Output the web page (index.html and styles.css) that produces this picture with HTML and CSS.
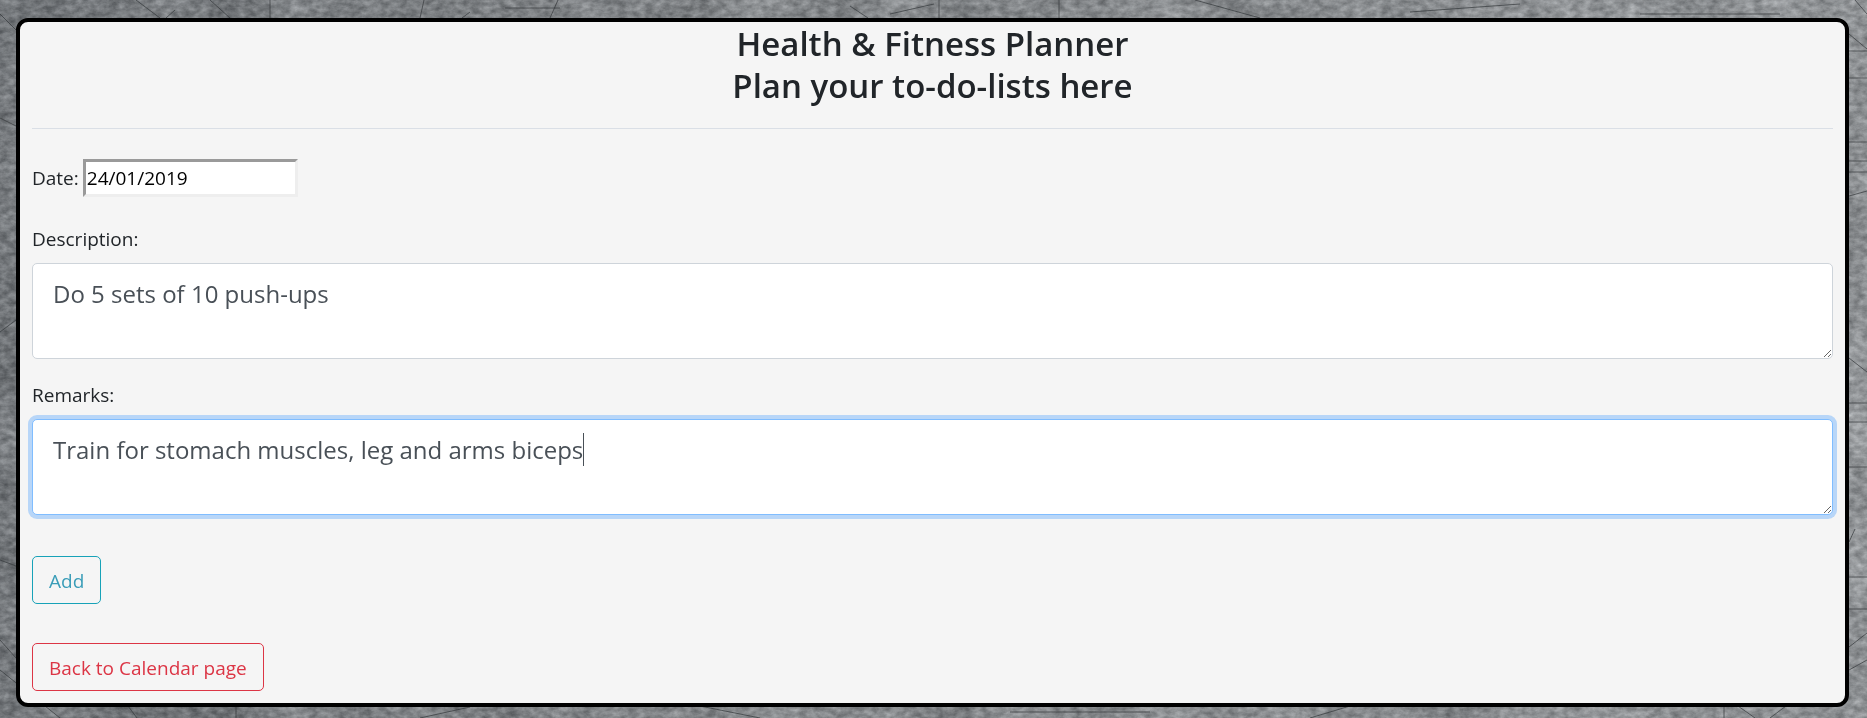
FILE: index.html
```html
<!DOCTYPE html>
<html lang="en">
<head>
<meta charset="utf-8">
<title>Health &amp; Fitness Planner</title>
<link rel="stylesheet" href="styles.css">
</head>
<body>
<svg class="backdrop" aria-hidden="true" width="100%" height="100%" preserveAspectRatio="none" viewBox="0 0 1867 718">
  <defs>
    <linearGradient id="shade" x1="0" y1="0" x2="1" y2="0">
      <stop offset="0" stop-color="#666c70"/>
      <stop offset="0.4" stop-color="#8b9092"/>
      <stop offset="1" stop-color="#a8adaf"/>
    </linearGradient>
    <filter id="grain" x="0" y="0" width="100%" height="100%" color-interpolation-filters="sRGB">
      <feTurbulence type="fractalNoise" baseFrequency="0.11 0.17" numOctaves="4" seed="8"/>
      <feColorMatrix values="0.8 0 0 0 0.08  0.8 0 0 0 0.09  0.8 0 0 0 0.1  0 0 0 0 0.4"/>
    </filter>
    <filter id="blotch" x="0" y="0" width="100%" height="100%" color-interpolation-filters="sRGB">
      <feTurbulence type="fractalNoise" baseFrequency="0.015" numOctaves="3" seed="3"/>
      <feColorMatrix values="1 0 0 0 0  1 0 0 0 0  1 0 0 0 0.02  0 0 0 0 0.3"/>
    </filter>
  </defs>
  <rect width="1867" height="718" fill="url(#shade)"/>
  <rect width="1867" height="718" filter="url(#blotch)"/>
  <rect width="1867" height="718" filter="url(#grain)"/>
  <g fill="none" stroke="#33383b" stroke-opacity="0.7">
    <path d="M136 0 160 18M175 10 166 18M210 0 230 18M270 0V18M424 0 420 18M470 12 462 18M505 8H560M558 0 550 18M850 6 868 18M890 14 934 4M939 0V18M1059 0V18M1195 0 1260 18M1410 12 1520 4M1640 14H1780M1855 0 1867 14"/>
    <path d="M0 14 16 30M0 118 16 126M0 332 16 320M0 640 16 658M0 560 16 566M0 670 60 718M128 706 137 718M236 706V718M420 718 470 707M700 706 760 718M1010 712H1150M1310 718 1350 706M1724 706V718M1738 706 1755 718M1770 718 1786 706"/>
    <path d="M1849 34 1867 49M1849 51H1867M1849 78H1867M1849 142H1867M1849 161H1867M1849 172H1867M1849 196 1867 191M1849 358 1867 372M1849 403H1867M1849 422H1867M1849 467H1867M1849 542 1855 529M1849 577H1867M1849 609H1867M1849 647 1867 633M1849 670 1867 660"/>
  </g>
</svg>
<main class="planner">
  <header class="planner-header">
    <h1 class="title">Health &amp; Fitness Planner<br>Plan your to-do-lists here</h1>
  </header>
  <hr class="divider">
  <form class="planner-form">
    <div class="date-row">
      <label for="date">Date:</label>
      <input class="date-input" id="date" type="text" value="24/01/2019">
    </div>
    <div class="field">
      <label for="description">Description:</label>
      <textarea class="text-area" id="description" rows="2">Do 5 sets of 10 push-ups</textarea>
    </div>
    <div class="field">
      <label for="remarks">Remarks:</label>
      <div class="caret-box">
        <textarea class="text-area" id="remarks" rows="2" autofocus>Train for stomach muscles, leg and arms biceps</textarea>
        <span class="caret" id="caret"></span>
      </div>
    </div>
    <div class="actions">
      <button class="btn btn-info" type="submit">Add</button>
      <a class="btn btn-danger" href="#">Back to Calendar page</a>
    </div>
  </form>
</main>
<script src="script.js"></script>
</body>
</html>
```

FILE: styles.css
```css
* {
  box-sizing: border-box;
}

body {
  margin: 18px 18px 11px 16px;
  background: #7f8486;
  color: #212529;
  font-family: "Open Sans", "Noto Sans", sans-serif;
  font-size: 19px;
  line-height: 30px;
}

.backdrop {
  position: fixed;
  inset: 0;
  z-index: -1;
}

.planner {
  padding: 0 12px 12px;
  border: 4px solid #000;
  border-radius: 12px;
  background: #f5f5f5;
}

.title {
  margin: 0;
  padding-top: 1px;
  font-size: 33px;
  font-weight: 600;
  line-height: 42px;
  text-align: center;
}

.divider {
  height: 1px;
  margin: 21px 0 30px;
  border: 0;
  background: #dadfe6;
}

.date-row {
  display: flex;
  align-items: center;
  gap: 4px;
  margin-bottom: 27px;
}

.date-input {
  width: 215px;
  height: 38px;
  padding: 1px;
  border: 3px solid;
  border-color: #9a9a9a #eee #eee #9a9a9a;
  background: #fff;
  color: #000;
  font: inherit;
}

.field {
  display: flex;
  flex-direction: column;
  gap: 9px;
  margin-bottom: 21px;
}

.text-area {
  display: block;
  width: 100%;
  padding: 11px 20px 9px;
  border: 1px solid #ced4da;
  border-radius: 5px;
  outline: 0;
  background: #fff;
  color: #495057;
  font: inherit;
  font-size: 24px;
  line-height: 37px;
  resize: vertical;
}

.text-area:focus {
  border-color: #80bdff;
  box-shadow: 0 0 0 4px #b8d6f8;
}

.caret-box {
  position: relative;
}

.caret-box .text-area {
  caret-color: transparent;
}

.caret {
  position: absolute;
  top: 14px;
  left: 21px;
  width: 1px;
  height: 33px;
  background: #495057;
  pointer-events: none;
}

.actions {
  display: flex;
  flex-direction: column;
  align-items: flex-start;
  gap: 39px;
  padding-top: 20px;
}

.btn {
  padding: 9px 16px 7px;
  border: 1px solid;
  border-radius: 5px;
  background: transparent;
  font: inherit;
  line-height: 30px;
  text-decoration: none;
}

.btn-info {
  border-color: #17a2b8;
  color: #3a9db8;
}

.btn-danger {
  border-color: #dc3545;
  color: #dc3545;
}
```

FILE: script.js
```js
const remarks = document.getElementById("remarks");
const caret = document.getElementById("caret");

// Keeps the caret line at the end of the text before the cursor.
function placeCaret() {
  const style = getComputedStyle(remarks);
  const context = document.createElement("canvas").getContext("2d");
  context.font = style.fontSize + " " + style.fontFamily;
  const before = remarks.value.slice(0, remarks.selectionEnd);
  const start = parseInt(style.paddingLeft) + parseInt(style.borderLeftWidth);
  caret.style.left = Math.round(start + context.measureText(before).width) + "px";
}

remarks.focus();
remarks.setSelectionRange(remarks.value.length, remarks.value.length);
remarks.addEventListener("input", placeCaret);
remarks.addEventListener("keyup", placeCaret);
remarks.addEventListener("click", placeCaret);
placeCaret();
```
